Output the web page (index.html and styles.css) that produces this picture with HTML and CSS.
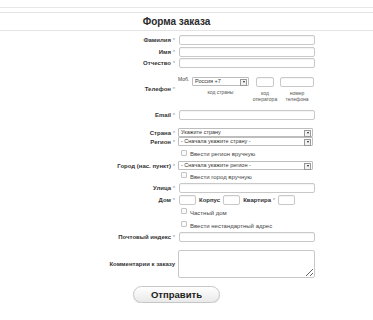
FILE: index.html
```html
<!DOCTYPE html>
<html lang="ru">
<head>
    <meta charset="UTF-8">
    <meta name="viewport" content="width=device-width, initial-scale=1.0">
    <title>Форма заказа</title>
    <link rel="stylesheet" href="styles.css">
</head>
<body>
    <div class="topline"></div>
    <div class="head"><h1>Форма заказа</h1></div>

    <form class="order">
        <div class="row"><label>Фамилия <i>*</i></label><input class="text wide" type="text"></div>
        <div class="row"><label>Имя <i>*</i></label><input class="text wide" type="text"></div>
        <div class="row"><label>Отчество <i>*</i></label><input class="text wide" type="text"></div>

        <div class="row phone-row">
            <label>Телефон <i>*</i></label>
            <div class="phone">
                <span class="mob">Моб.</span>
                <div class="ph-col col-country">
                    <div class="select"><select><option>Россия +7</option></select></div>
                    <span class="hint">код страны</span>
                </div>
                <div class="ph-col col-op">
                    <input class="text" type="text">
                    <span class="hint">код<br>оператора</span>
                </div>
                <div class="ph-col col-num">
                    <input class="text" type="text">
                    <span class="hint">номер<br>телефона</span>
                </div>
            </div>
        </div>

        <div class="row email-row"><label>Email <i>*</i></label><input class="text wide" type="text"></div>

        <div class="row country-row"><label>Страна <i>*</i></label>
            <div class="select wide-sel"><select><option>Укажите страну</option></select></div>
        </div>
        <div class="row region-row"><label>Регион <i>*</i></label>
            <div class="select wide-sel"><select><option>- Сначала укажите страну -</option></select></div>
        </div>
        <label class="check check-region"><input type="checkbox"> Ввести регион вручную</label>
        <div class="row city-row"><label>Город (нас. пункт) <i>*</i></label>
            <div class="select wide-sel"><select><option>- Сначала укажите регион -</option></select></div>
        </div>
        <label class="check check-city"><input type="checkbox"> Ввести город вручную</label>

        <div class="row street-row"><label>Улица <i>*</i></label><input class="text wide" type="text"></div>
        <div class="row house-row"><label>Дом <i>*</i></label>
            <div class="house">
                <input class="text small" type="text">
                <span class="inl">Корпус</span>
                <input class="text small" type="text">
                <span class="inl">Квартира <i>*</i></span>
                <input class="text small" type="text">
            </div>
        </div>
        <label class="check check-private"><input type="checkbox"> Частный дом</label>
        <label class="check check-custom"><input type="checkbox"> Ввести нестандартный адрес</label>

        <div class="row zip-row"><label>Почтовый индекс <i>*</i></label><input class="text wide" type="text"></div>
        <div class="row comment-row"><label>Комментарии к заказу</label><textarea class="area"></textarea></div>

        <div class="actions"><button type="button" class="send">Отправить</button></div>
    </form>
</body>
</html>
```

FILE: styles.css
```css
* {
    box-sizing: border-box;
}
body {
    margin: 0;
    background: #fff;
    font-family: "Liberation Sans", Arial, sans-serif;
    color: #333;
}
.topline {
    height: 1px;
    margin-top: 7px;
    background: #e8e8e8;
}
.head {
    margin-top: 4px;
    height: 19px;
    border-top: 1px solid #e4e4e4;
    border-bottom: 1px solid #e4e4e4;
    display: flex;
    align-items: center;
    justify-content: center;
    padding-right: 20px;
}
.head h1 {
    margin: 0;
    font-size: 10px;
    font-weight: bold;
    color: #2b2b2b;
}
.order {
    padding-top: 4px;
}
.row {
    display: grid;
    grid-template-columns: 178px auto;
    align-items: center;
    margin-top: 1.5px;
}
.row:first-child {
    margin-top: 0;
}
.row > label {
    font-size: 6px;
    font-weight: bold;
    text-align: right;
    padding-right: 3px;
    white-space: nowrap;
    color: #333;
}
.row i, .inl i {
    font-style: normal;
    font-weight: normal;
    color: #999;
}
.text {
    height: 10px;
    margin: 0;
    padding: 0 2px;
    border: 1px solid #c9c9c9;
    border-radius: 2px;
    background: #fff;
    font-size: 6px;
    box-shadow: inset 0 1px 1px rgba(0,0,0,0.05);
}
.wide {
    width: 136px;
    margin-left: 1px;
}

/* phone */
.phone-row {
    margin-top: 7px;
}
.phone {
    display: flex;
    align-items: flex-start;
    padding-top: 2px;
}
.mob {
    width: 14px;
    font-size: 5px;
    color: #444;
    line-height: 6px;
    margin-top: -1px;
}
.ph-col {
    display: flex;
    flex-direction: column;
    align-items: center;
}
.col-country {
    width: 57px;
}
.col-op {
    width: 18px;
    margin-left: 7px;
}
.col-op .text {
    width: 18px;
}
.col-num {
    width: 34px;
    margin-left: 6px;
}
.col-num .text {
    width: 34px;
}
.col-country .select {
    width: 57px;
}
.hint {
    margin-top: 3px;
    font-size: 5px;
    line-height: 6px;
    color: #555;
    text-align: center;
    white-space: nowrap;
}

/* selects */
.select {
    position: relative;
    height: 9px;
}
.select select {
    -webkit-appearance: none;
    appearance: none;
    display: block;
    width: 100%;
    height: 9px;
    margin: 0;
    padding: 0 0 0 2px;
    border: 1px solid #bdbdbd;
    border-radius: 1px;
    background: #fff;
    font-family: "Liberation Sans", Arial, sans-serif;
    font-size: 5.5px;
    line-height: 7px;
    color: #333;
}
.select::after {
    content: "";
    position: absolute;
    right: 2px;
    top: 2px;
    width: 5px;
    height: 5px;
    border: 1px solid #999;
    background: #f2f2f2;
    pointer-events: none;
}
.select::before {
    content: "";
    position: absolute;
    right: 4px;
    top: 4px;
    border-left: 1px solid transparent;
    border-right: 1px solid transparent;
    border-top: 2px solid #222;
    z-index: 1;
    pointer-events: none;
}
.wide-sel {
    width: 135px;
}
.email-row {
    margin-top: 8px;
}
.country-row {
    margin-top: 8px;
}
.region-row {
    margin-top: 0;
}

/* checkboxes */
.check {
    display: flex;
    align-items: center;
    gap: 3px;
    height: 10px;
    padding-left: 181px;
    font-size: 6px;
    color: #444;
}
.check input {
    -webkit-appearance: none;
    appearance: none;
    width: 6px;
    height: 6px;
    margin: -3px 0 0;
    border: 1px solid #c4c4c4;
    border-radius: 1px;
    background: #fafafa;
}
.check-region {
    margin-top: 3px;
}
.city-row {
    margin-top: 2px;
}
.check-city {
    margin-top: 1.5px;
}
.street-row {
    margin-top: 1px;
}
.house-row {
    margin-top: 2px;
}
.house {
    display: flex;
    align-items: center;
    margin-left: 1px;
}
.small {
    width: 17px;
}
.inl {
    font-size: 6px;
    font-weight: bold;
    margin: 0 2px 0 3px;
    color: #333;
}
.inl + .small {
    margin-left: 1px;
}
.check-private {
    margin-top: 3px;
}
.check-custom {
    margin-top: 3px;
}
.zip-row {
    margin-top: 1px;
}
.comment-row {
    margin-top: 8px;
}
.area {
    width: 137px;
    height: 28px;
    margin: 0;
    border: 1px solid #c9c9c9;
    border-radius: 2px;
    resize: both;
    font-size: 6px;
}

/* button */
.actions {
    margin-top: 6.5px;
    padding-left: 133px;
}
.send {
    width: 87px;
    height: 17px;
    padding: 0;
    border: 1px solid #c6c6c6;
    border-radius: 9px;
    background: linear-gradient(to bottom, #ffffff, #e9e9e9);
    box-shadow: 0 1px 1px rgba(0,0,0,0.12);
    font-family: "Liberation Sans", Arial, sans-serif;
    font-size: 9.5px;
    font-weight: bold;
    color: #222;
    cursor: pointer;
}
```
